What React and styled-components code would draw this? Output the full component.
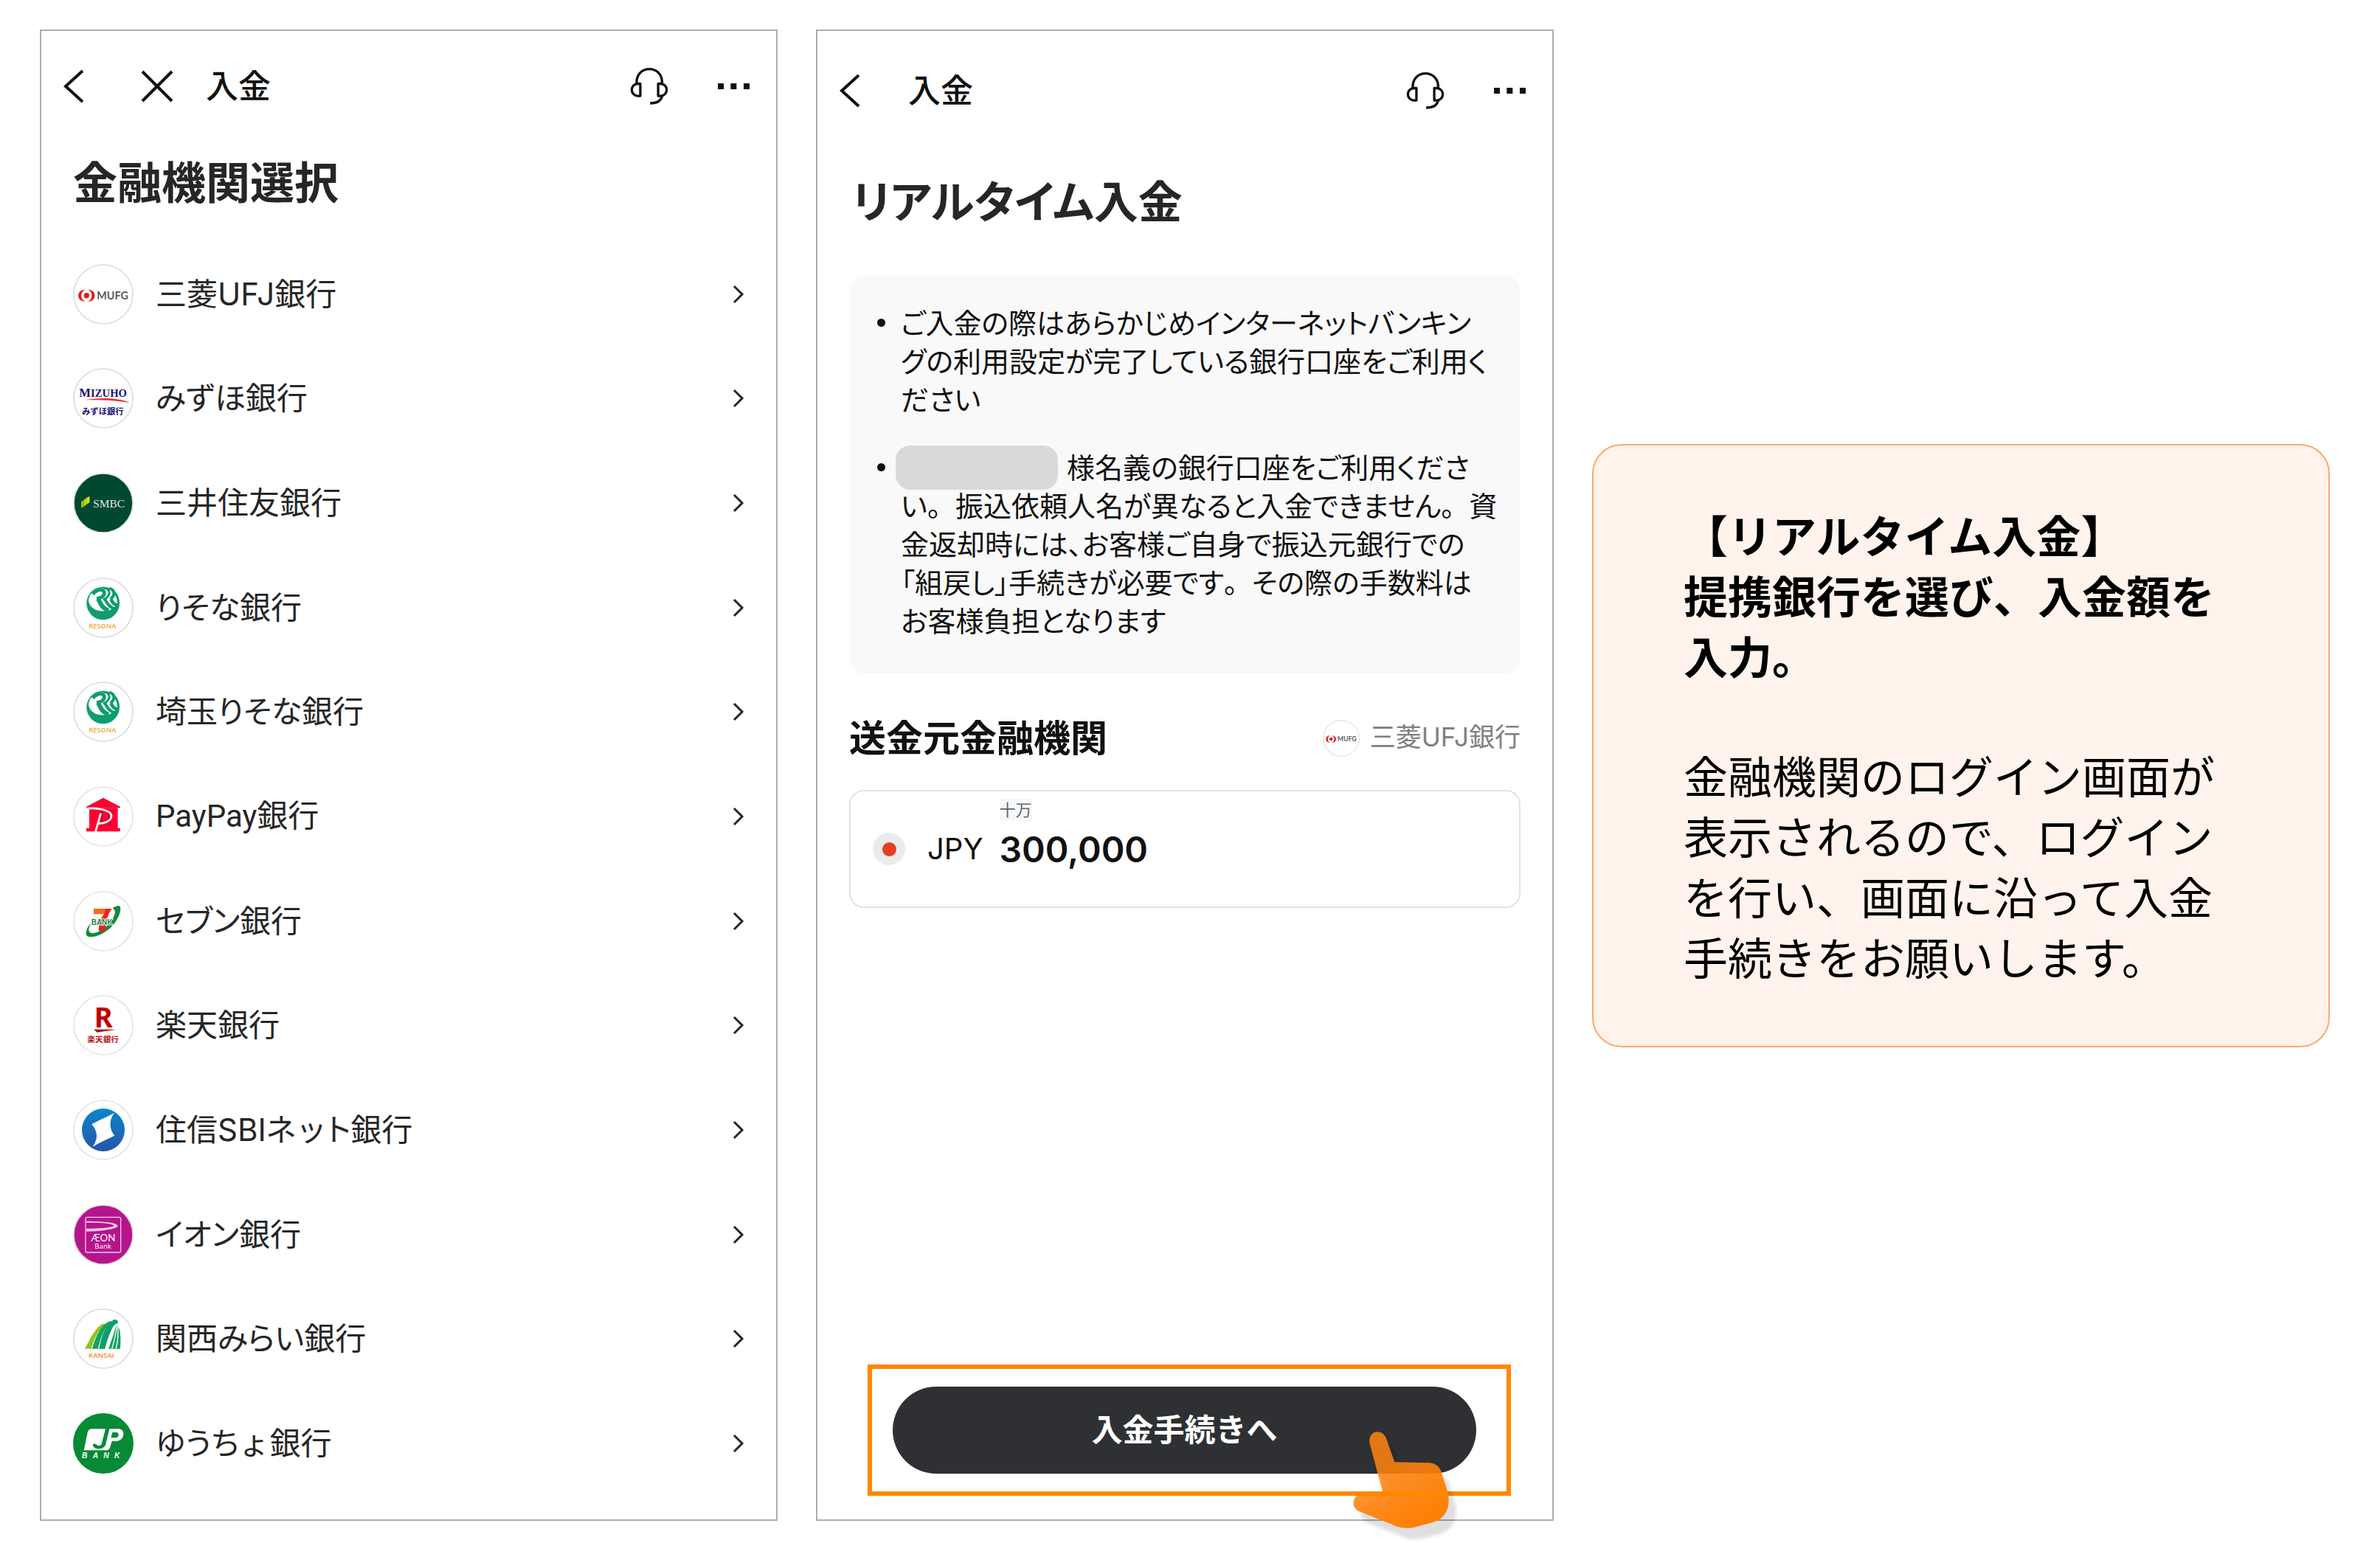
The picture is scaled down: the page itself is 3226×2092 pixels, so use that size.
import React from 'react';
import styled, { createGlobalStyle } from 'styled-components';

const GlobalStyle = createGlobalStyle`
  * {
    box-sizing: border-box;
  }

  body {
    margin: 0;
    background: #fff;
    color: #111;
    font-family: Inter, 'Noto Sans CJK JP', sans-serif;
  }

  h1, h2, p, ul {
    margin: 0;
    padding: 0;
    list-style: none;
  }

  button, input {
    font-family: inherit;
    color: inherit;
    background: none;
    border: 0;
    padding: 0;
  }
`;

const Page = styled.main`
  display: grid;
  grid-template-columns: repeat(3, minmax(0, 1fr));
  gap: 52px;
  min-height: 100vh;
  padding: 40px 68px 30px 54px;
`;

const Phone = styled.section`
  display: flex;
  flex-direction: column;
  border: 2px solid #adadad;
  padding-bottom: 32px;
`;

const TopBar = styled.header`
  display: flex;
  align-items: center;
  height: ${(props) => (props.$tall ? '162px' : '150px')};
  padding: 0 32px 0 18px;
`;

const IconButton = styled.button`
  display: flex;
  flex: none;
  align-items: center;
  justify-content: center;
  width: 52px;
  height: 60px;
  margin-right: ${(props) => props.$gap || 0}px;
  cursor: pointer;
`;

const BarTitle = styled.h1`
  flex: 1;
  font-size: 44px;
  line-height: 60px;
  font-weight: 500;
`;

const ScreenTitle = styled.h2`
  margin-top: 16px;
  padding: 0 43px;
  font-size: 60px;
  line-height: 80px;
  font-weight: 700;
  color: #262626;
  font-feature-settings: 'palt';
`;

const BankList = styled.ul`
  flex: 1;
  display: grid;
  grid-auto-rows: 1fr;
  margin-top: 40px;
`;

const BankRow = styled.button`
  display: flex;
  align-items: center;
  gap: 30px;
  width: 100%;
  height: 100%;
  padding: 0 43px;
  text-align: left;
  cursor: pointer;
`;

const BankName = styled.span`
  flex: 1;
  font-family: ${(props) => props.$latin || 'Inter'}, 'Noto Sans CJK JP', sans-serif;
  font-size: 42px;
  line-height: 60px;
  color: #262626;
  font-feature-settings: 'palt';
`;

/* keeps small kana and full stops at their full width inside palt text */
const FullWidth = styled.span`
  font-feature-settings: normal;
`;

const Logo = styled.svg`
  display: block;
  flex: none;
  width: ${(props) => props.$size || 82}px;
  height: ${(props) => props.$size || 82}px;
`;

const DepositBody = styled.div`
  flex: 1;
  display: flex;
  flex-direction: column;
  padding: 30px 43px 0;
`;

const DepositTitle = styled(ScreenTitle)`
  margin-top: 0;
  padding: 0 4px;
`;

const Notice = styled.ul`
  display: flex;
  flex-direction: column;
  gap: 40px;
  margin-top: 60px;
  padding: 38px 32px 45px 70px;
  border-radius: 20px;
  background: #f9f9f9;
`;

const NoticeItem = styled.li`
  position: relative;
  font-size: 38px;
  line-height: 52px;
  white-space: nowrap;
  font-feature-settings: 'palt';

  &::before {
    content: '';
    position: absolute;
    left: -32px;
    top: 20px;
    width: 11px;
    height: 11px;
    border-radius: 50%;
    background: #111;
  }
`;

const HiddenName = styled.span`
  display: inline-block;
  width: 220px;
  height: 60px;
  margin: -16px 12px -8px -7px;
  border-radius: 20px;
  background: #d9d9d9;
  vertical-align: middle;
`;

const SourceRow = styled.div`
  display: flex;
  align-items: center;
  justify-content: space-between;
  margin-top: 52px;
`;

const SourceTitle = styled.h2`
  font-size: 50px;
  line-height: 72px;
  font-weight: 700;
`;

const SourceBank = styled.span`
  display: flex;
  align-items: center;
  gap: 14px;
  font-size: 35px;
  line-height: 52px;
  color: #808080;
`;

const SourceBankName = styled.span`
  padding-bottom: 4px;
`;

const AmountField = styled.div`
  display: flex;
  align-items: center;
  height: 160px;
  margin-top: 34px;
  padding: 0 30px;
  border: 2px solid #e3e3e3;
  border-radius: 20px;
`;

const Flag = styled.span`
  display: flex;
  align-items: center;
  justify-content: center;
  width: 44px;
  height: 44px;
  border-radius: 50%;
  background: #ebebeb;

  &::before {
    content: '';
    width: 19px;
    height: 19px;
    border-radius: 50%;
    background: #e43e25;
  }
`;

const Currency = styled.label`
  margin: 0 22px 0 30px;
  font-size: 40px;
  line-height: 60px;
`;

const Amount = styled.div`
  flex: 1;
  display: grid;
  grid-template-rows: 30px 76px 30px;
  justify-items: start;
`;

const Unit = styled.span`
  font-size: 22px;
  line-height: 30px;
  color: #666;
  background: #f6f7f9;
`;

const AmountInput = styled.input`
  width: 100%;
  font-size: 48px;
  font-weight: 600;
  outline: none;
`;

const Highlight = styled.div`
  position: relative;
  margin: auto 13px 0 25px;
  padding: 24px 41px 24px 28px;
  border: 6px solid #ff8800;
`;

const SubmitButton = styled.button`
  display: block;
  width: 100%;
  height: 118px;
  padding-bottom: 8px;
  border-radius: 59px;
  background: #2f3034;
  color: #fff;
  font-size: 42px;
  font-weight: 700;
  cursor: pointer;
`;

const Hand = styled.svg`
  position: absolute;
  right: 42px;
  bottom: -70px;
  width: 200px;
  height: 172px;
  pointer-events: none;
`;

const Callout = styled.aside`
  align-self: start;
  margin-top: 562px;
  padding: 79px 122px 81px;
  border: 2px solid #ffa86b;
  border-radius: 40px;
  background: #fff3ec;
  color: #000;
  font-family: 'Noto Sans CJK JP', sans-serif;
  font-size: 60px;
  line-height: 82px;
`;

const CalloutTitle = styled.p`
  margin-bottom: 80px;
  font-weight: 700;
`;

const BackIcon = () => (
  <svg width="30" height="48" viewBox="0 0 30 48" fill="none" stroke="#111" strokeWidth="4">
    <path d="M27 3L4 24L27 45" />
  </svg>
);

const CloseIcon = () => (
  <svg width="44" height="44" viewBox="0 0 44 44" fill="none" stroke="#111" strokeWidth="4">
    <path d="M2 2L42 42M42 2L2 42" />
  </svg>
);

const HeadsetIcon = () => (
  <svg width="52" height="52" viewBox="41 30 157 157" fill="none" stroke="#111" strokeWidth="10" strokeLinejoin="round">
    <path d="M68 97C66 60 90 38 120 38S174 60 172 97" />
    <path d="M83 98V148H73A25 25 0 0 1 73 98Z" />
    <path d="M156 98V148H166A25 25 0 0 0 166 98Z" />
    <path d="M172 148C168 168 152 178 123 178" />
  </svg>
);

const MoreIcon = () => (
  <svg width="43" height="8" viewBox="0 0 129 24" fill="#111">
    <rect x="0" y="0" width="24" height="24" />
    <rect x="52" y="0" width="24" height="24" />
    <rect x="105" y="0" width="24" height="24" />
  </svg>
);

const ChevronIcon = () => (
  <svg width="16" height="26" viewBox="0 0 16 26" fill="none" stroke="#262626" strokeWidth="3">
    <path d="M2 2L13 13L2 24" />
  </svg>
);

const Ring = ({ fill = '#fff', stroke = '#dcdcdc' }) => (
  <circle cx="123" cy="123" r="120" fill={fill} stroke={stroke} strokeWidth="5" />
);

const MufgLogo = ({ size }) => (
  <Logo viewBox="0 0 246 246" $size={size}>
    <Ring />
    <circle cx="55" cy="128" r="11" fill="#e01c1c" />
    <path d="M50 104C12 102 12 154 50 152C28 144 28 112 50 104Z" fill="#e01c1c" />
    <path d="M60 104C98 102 98 154 60 152C82 144 82 112 60 104Z" fill="#e01c1c" />
    <text x="97" y="144" fontFamily="Lato" fontWeight="700" fontSize="43" fill="#5a5a5c">MUFG</text>
  </Logo>
);

const MizuhoLogo = () => (
  <Logo viewBox="0 0 246 246">
    <Ring />
    <text x="25" y="116" fontFamily="Liberation Serif" fontWeight="700" fontSize="50" fill="#1c1173">
      M<tspan fontSize="44">IZUHO</tspan>
    </text>
    <path d="M52 130C110 118 190 122 230 141C180 132 110 128 52 130Z" fill="#e5343c" />
    <text x="36" y="189" fontFamily="Noto Sans CJK JP" fontWeight="700" fontSize="34" fill="#1c1173">みずほ銀行</text>
  </Logo>
);

const SmbcLogo = () => (
  <Logo viewBox="0 0 246 246">
    <Ring fill="#004832" stroke="#d6e2dd" />
    <path d="M33 118L44 111V138L33 143Z" fill="#8fbf1f" />
    <path d="M44 110L55 102V128L44 138Z" fill="#c4d700" />
    <path d="M55 101L67 96V121L55 128Z" fill="#d9e021" />
    <text x="82" y="140" fontFamily="Liberation Serif" fontSize="46" fill="#dfe9e4">SMBC</text>
  </Logo>
);

const ResonaLogo = () => (
  <Logo viewBox="0 0 246 246">
    <Ring />
    <circle cx="122" cy="105" r="67" fill="#0f9d6c" />
    <path d="M118 43C84 46 60 72 64 100C72 126 98 140 132 136C164 132 182 112 184 92C182 72 160 44 118 43Z" fill="#fff" />
    <g fill="none" stroke="#0f9d6c">
      <path d="M80 68C92 50 118 44 126 58C132 72 116 84 96 86" strokeWidth="14" />
      <path d="M100 86C112 96 110 122 144 134" strokeWidth="18" />
      <path d="M122 42C152 44 154 68 134 84L122 90" strokeWidth="9" />
      <path d="M128 88C138 98 142 120 168 126" strokeWidth="12" />
      <path d="M148 44C172 52 172 72 152 88" strokeWidth="12" />
      <path d="M154 88C160 102 166 112 180 112" strokeWidth="14" />
      <path d="M164 56C178 68 184 84 184 104" strokeWidth="9" />
    </g>
    <text x="64" y="207" fontFamily="Open Sans" fontWeight="600" fontSize="28" fill="#eeac3c">RESONA</text>
  </Logo>
);

const PayPayLogo = () => (
  <Logo viewBox="0 0 246 246">
    <Ring stroke="#e3e3e3" />
    <path d="M123 47L192 83V88H54V83Z" fill="#ff0033" />
    <path d="M66 88H182V170H192V184H54V170H66Z" fill="#ff0033" />
    <path d="M112 96H120V168H112Z M142 98H152V160H142Z" fill="#c80028" />
    <path d="M48 92C100 84 158 98 156 122C154 144 124 152 100 152" fill="none" stroke="#fff" strokeWidth="8" />
    <path d="M113 110L91 186" stroke="#fff" strokeWidth="8" />
  </Logo>
);

const SevenLogo = () => (
  <Logo viewBox="0 0 246 246">
    <Ring stroke="#e3e3e3" />
    <path
      d="M186 60C202 62 190 112 154 148C118 184 66 196 54 180C50 160 62 140 76 128C60 150 60 168 76 172C100 172 130 154 152 126C172 100 178 78 160 70C168 64 178 60 186 60Z"
      fill="#128a3c"
    />
    <path d="M84 72H132V94H84Z" fill="#f36c1c" />
    <path d="M132 72H158C144 90 132 120 132 163H104C106 130 112 110 128 92Z" fill="#f0201c" />
    <text
      x="74"
      y="139"
      fontFamily="Liberation Sans"
      fontWeight="700"
      fontSize="30"
      fill="#128a3c"
      stroke="#fff"
      strokeWidth="5"
      paintOrder="stroke"
    >
      BANK
    </text>
  </Logo>
);

const RakutenLogo = () => (
  <Logo viewBox="0 0 246 246">
    <Ring stroke="#e3e3e3" />
    <text x="86" y="131" fontFamily="Noto Sans" fontWeight="700" fontSize="114" fill="#bf0000">R</text>
    <path d="M84 140H176L98 152Z" fill="#bf0000" />
    <text x="58" y="192" fontFamily="Noto Sans CJK JP" fontWeight="700" fontSize="32" fill="#b01515">楽天銀行</text>
  </Logo>
);

const SbiLogo = () => (
  <Logo viewBox="0 0 246 246">
    <defs>
      <linearGradient id="sbi" x1="0" y1="0" x2="0" y2="1">
        <stop offset="0" stopColor="#0b86cf" />
        <stop offset="1" stopColor="#2656a6" />
      </linearGradient>
    </defs>
    <Ring stroke="#e3e3e3" />
    <circle cx="123" cy="123" r="87" fill="url(#sbi)" />
    <path d="M167 54C146 84 146 118 169 146C140 160 110 172 79 192C104 158 100 128 76 99C106 84 138 70 167 54Z" fill="#fff" />
  </Logo>
);

const AeonLogo = () => (
  <Logo viewBox="0 0 246 246">
    <Ring fill="#b5158c" stroke="#e3cfe0" />
    <rect x="51" y="52" width="143" height="143" rx="6" fill="none" stroke="#f3cbe8" strokeWidth="4" />
    <path d="M54 68C110 68 176 72 182 86C180 100 120 108 54 110V98C110 98 160 94 166 86C160 76 110 74 54 74Z" fill="#f3cbe8" />
    <text x="73" y="150" fontFamily="Lato" fontSize="40" fill="#fff">ÆON</text>
    <text x="88" y="181" fontFamily="Open Sans" fontSize="29" fill="#fff">Bank</text>
  </Logo>
);

const KansaiLogo = () => (
  <Logo viewBox="0 0 246 246">
    <Ring />
    <path d="M48 164C72 120 92 74 122 62L134 64C106 84 86 120 74 164Z" fill="#8fc31f" />
    <path d="M78 164C92 112 116 64 150 52L158 54C128 76 112 116 102 164Z" fill="#12a45f" />
    <path d="M106 164C116 108 134 62 166 46C178 42 184 50 182 62C164 56 144 112 130 164Z" fill="#0f9d6c" />
    <path d="M144 164C160 120 172 84 176 66C192 72 196 116 192 164Z" fill="#12a45f" />
    <path d="M158 164C170 124 176 100 178 68M174 164C184 130 184 100 182 72" fill="none" stroke="#fff" strokeWidth="4" />
    <text x="63" y="201" fontFamily="Open Sans" fontWeight="600" fontSize="29" fill="#ee8a32">KANSAI</text>
  </Logo>
);

const JpBankLogo = () => (
  <Logo viewBox="0 0 246 246">
    <circle cx="123" cy="123" r="123" fill="#078a36" />
    <path d="M78 64H132L116 126C114 134 98 134 94 126H80C80 150 122 152 132 130L148 64H186C216 66 210 112 176 114H158L150 140C148 146 142 151 134 151H44L58 84C60 70 66 64 78 64Z" fill="#fff" />
    <path d="M160 78H178C190 80 186 100 174 100H154Z" fill="#078a36" />
    <path d="M138 64L122 124C118 140 90 138 88 124" fill="none" stroke="#078a36" strokeWidth="5" />
    {['B', 'A', 'N', 'K'].map((letter, i) => (
      <text key={letter} x={36 + i * 44} y="184" fontFamily="Liberation Sans" fontWeight="700" fontStyle="italic" fontSize="31" fill="#fff">
        {letter}
      </text>
    ))}
  </Logo>
);

const banks = [
  { name: '三菱UFJ銀行', Icon: MufgLogo },
  { name: 'みずほ銀行', Icon: MizuhoLogo },
  { name: '三井住友銀行', Icon: SmbcLogo },
  { name: 'りそな銀行', Icon: ResonaLogo },
  { name: '埼玉りそな銀行', Icon: ResonaLogo },
  { name: 'PayPay銀行', Icon: PayPayLogo, latin: 'Roboto' },
  { name: 'セブン銀行', Icon: SevenLogo },
  { name: '楽天銀行', Icon: RakutenLogo },
  { name: '住信SBIネット銀行', Icon: SbiLogo },
  { name: 'イオン銀行', Icon: AeonLogo },
  { name: '関西みらい銀行', Icon: KansaiLogo },
  { name: 'ゆうちょ銀行', Icon: JpBankLogo },
];

const withSmallKana = (name) =>
  name.split(/([ょッ])/).map((part, i) => (i % 2 ? <FullWidth key={i}>{part}</FullWidth> : part));

const BarActions = () => (
  <>
    <IconButton $gap={62} aria-label="サポート">
      <HeadsetIcon />
    </IconButton>
    <IconButton aria-label="メニュー">
      <MoreIcon />
    </IconButton>
  </>
);

const BankSelectScreen = () => (
  <Phone>
    <TopBar>
      <IconButton $gap={61} aria-label="戻る">
        <BackIcon />
      </IconButton>
      <IconButton $gap={40} aria-label="閉じる">
        <CloseIcon />
      </IconButton>
      <BarTitle>入金</BarTitle>
      <BarActions />
    </TopBar>
    <ScreenTitle>金融機関選択</ScreenTitle>
    <BankList>
      {banks.map(({ name, Icon, latin }) => (
        <li key={name}>
          <BankRow>
            <Icon />
            <BankName $latin={latin}>{withSmallKana(name)}</BankName>
            <ChevronIcon />
          </BankRow>
        </li>
      ))}
    </BankList>
  </Phone>
);

const DepositScreen = () => (
  <Phone>
    <TopBar $tall>
      <IconButton $gap={53} aria-label="戻る">
        <BackIcon />
      </IconButton>
      <BarTitle>入金</BarTitle>
      <BarActions />
    </TopBar>
    <DepositBody>
      <DepositTitle>リアルタイム入金</DepositTitle>
      <Notice>
        <NoticeItem>
          ご入金の際はあらかじめインターネットバンキン
          <br />
          グの利用設定が完了している銀行口座をご利用く
          <br />
          ださい
        </NoticeItem>
        <NoticeItem>
          <HiddenName />
          様名義の銀行口座をご利用くださ
          <br />
          い<FullWidth>。</FullWidth>振込依頼人名が異なると入金できません<FullWidth>。</FullWidth>資
          <br />
          金返却時には、お客様ご自身で振込元銀行での
          <br />
          「組戻し」手続きが必要です<FullWidth>。</FullWidth>その際の手数料は
          <br />
          お客様負担となります
        </NoticeItem>
      </Notice>
      <SourceRow>
        <SourceTitle>送金元金融機関</SourceTitle>
        <SourceBank>
          <MufgLogo size={50} />
          <SourceBankName>三菱UFJ銀行</SourceBankName>
        </SourceBank>
      </SourceRow>
      <AmountField>
        <Flag />
        <Currency htmlFor="amount">JPY</Currency>
        <Amount>
          <Unit>十万</Unit>
          <AmountInput id="amount" defaultValue="300,000" />
        </Amount>
      </AmountField>
      <Highlight>
        <SubmitButton>入金手続きへ</SubmitButton>
        <Hand viewBox="0 0 600 516">
          <defs>
            <linearGradient id="hand" gradientUnits="userSpaceOnUse" x1="220" y1="220" x2="360" y2="440">
              <stop offset="0" stopColor="#ff8410" stopOpacity="0.86" />
              <stop offset="1" stopColor="#ff7e00" stopOpacity="0.98" />
            </linearGradient>
            <filter id="handShadow" x="-20%" y="-20%" width="140%" height="140%">
              <feGaussianBlur stdDeviation="7" />
            </filter>
            <path
              id="handShape"
              d="M169 108C164 54 226 50 238 94L271 187L412 190C440 192 456 208 463 234L486 306C500 364 484 410 434 430L352 452C318 458 290 456 262 441L128 388C98 374 96 338 120 322L140 306H222Z"
            />
          </defs>
          <use href="#handShape" x="31" y="46" fill="#000" opacity="0.12" filter="url(#handShadow)" />
          <use href="#handShape" fill="url(#hand)" />
          <path d="M120 315H488" stroke="#ff8800" strokeWidth="18" />
        </Hand>
      </Highlight>
    </DepositBody>
  </Phone>
);

const App = () => (
  <>
    <GlobalStyle />
    <Page lang="ja">
      <BankSelectScreen />
      <DepositScreen />
      <Callout>
        <CalloutTitle>
          【リアルタイム入金】
          <br />
          提携銀行を選び、入金額を入力。
        </CalloutTitle>
        <p>金融機関のログイン画面が表示されるので、ログインを行い、画面に沿って入金手続きをお願いします。</p>
      </Callout>
    </Page>
  </>
);

export default App;
